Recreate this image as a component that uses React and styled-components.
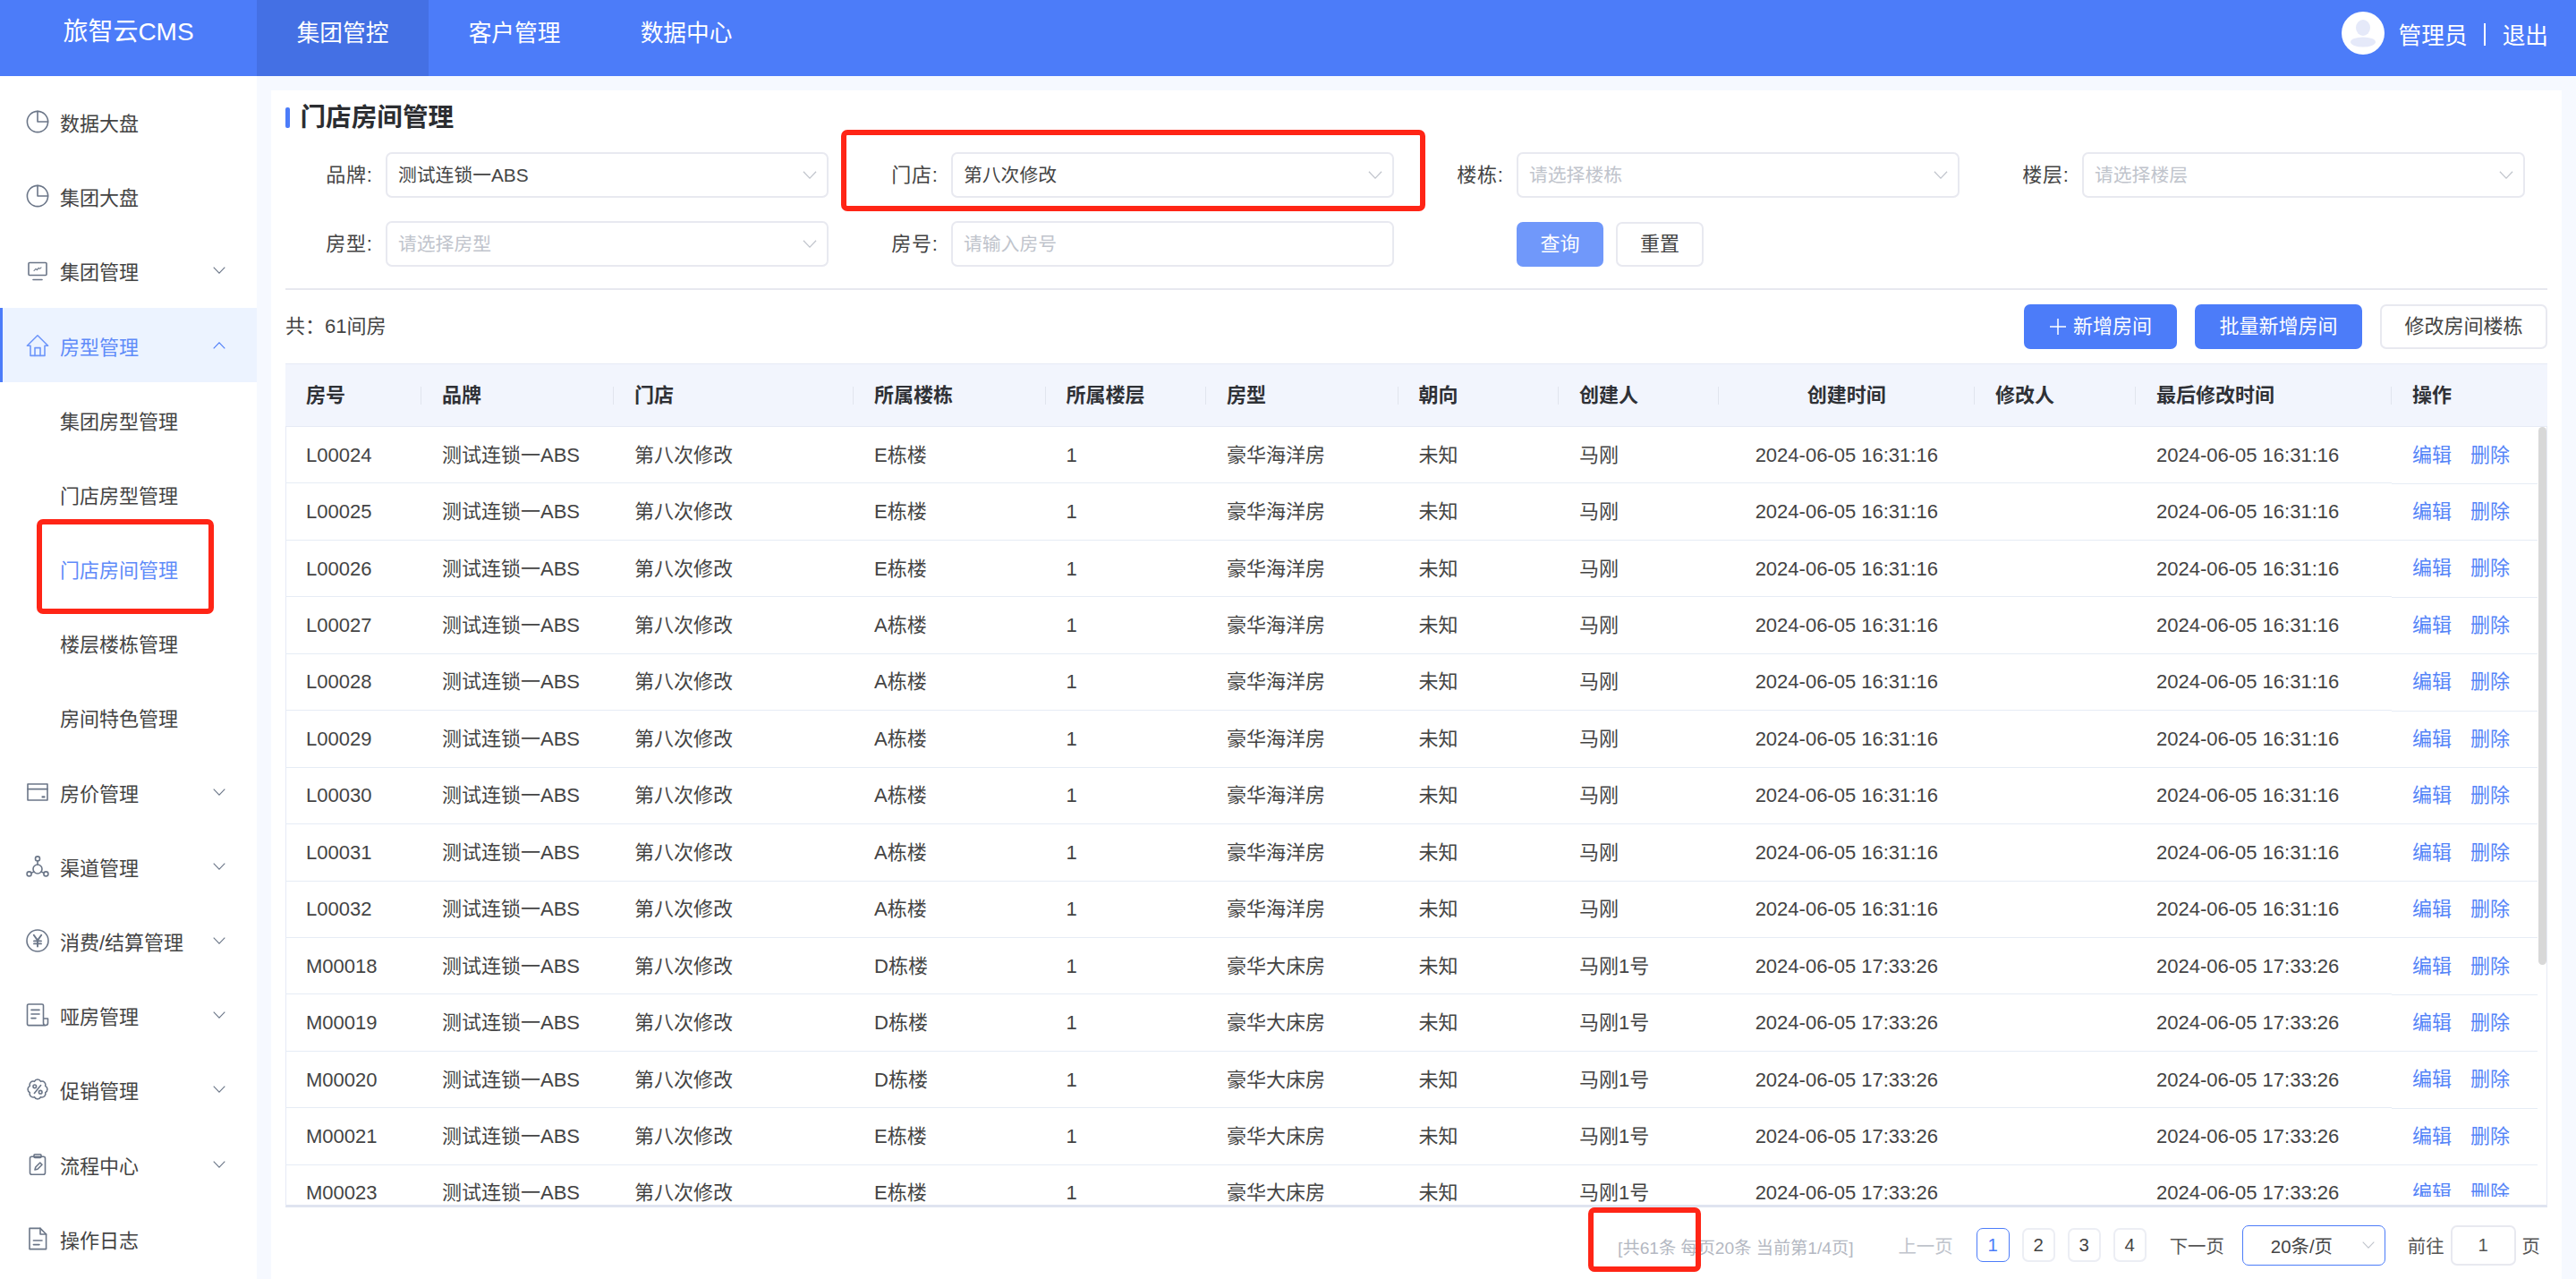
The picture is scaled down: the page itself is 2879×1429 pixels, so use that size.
import React from 'react';
import styled, { createGlobalStyle } from 'styled-components';

const GlobalStyle = createGlobalStyle`
	html, body {
		margin: 0;
		padding: 0;
		height: 100%;
		overflow: hidden;
		font-family: 'Liberation Sans', 'Noto Sans CJK SC', sans-serif;
		color: #444;
	}
	* {
		box-sizing: border-box;
	}
`;

const COLS = '152px 215px 268px 214.5px 179.5px 214.6px 179.4px 178.6px 286.4px 180px 286px';
const BLUE = '#4c7cf9';

// ---- icons ----
const Svg = ({ children, w = 26, h = 26 }) => (
	<svg width={w} height={h} viewBox='0 0 26 26' fill='none' stroke='currentColor' strokeWidth='1.6' strokeLinejoin='round' strokeLinecap='round'>
		{children}
	</svg>
);

const PieIcon = () => (
	<Svg>
		<circle cx='13' cy='13' r='11.6' />
		<path d='M13 1.4V13H24.6' />
	</Svg>
);
const MonitorIcon = () => (
	<Svg>
		<rect x='3' y='4.5' width='20' height='14' rx='1' />
		<path d='M8 23.5H18' />
		<path d='M9 13.5l2-2.2 1.4 1.4 1.8-2.4 1.2 1 1.6-1.4' strokeWidth='1.1' />
	</Svg>
);
const HouseIcon = () => (
	<Svg>
		<path d='M13 1.8L24.6 13.2H21V24.4H5V13.2H1.4Z' />
		<path d='M10 24.4V15.6H16V24.4' />
	</Svg>
);
const CardIcon = () => (
	<Svg>
		<rect x='2' y='4' width='22' height='18' />
		<path d='M2 9.6H24' />
		<path d='M17.6 18.4H21.4' strokeWidth='2.2' strokeLinecap='butt' />
	</Svg>
);
const NetworkIcon = () => (
	<Svg>
		<circle cx='13' cy='4.4' r='2.5' />
		<circle cx='3.6' cy='21.4' r='2.5' />
		<circle cx='22.4' cy='21.4' r='2.5' />
		<circle cx='13' cy='16' r='5' />
		<path d='M13 7V11M6 20.4L8.8 19M20 20.4L17.2 19' />
	</Svg>
);
const YenIcon = () => (
	<Svg>
		<circle cx='13' cy='13' r='12' />
		<path d='M8.8 6.8L13 12.6L17.2 6.8M13 12.6V19.6M9 13.4H17M9 16.4H17' strokeWidth='1.9' />
	</Svg>
);
const DocIcon = () => (
	<Svg>
		<path d='M22 24.6H3a1.5 1.5 0 0 1-1.5-1.5V2.5A1.5 1.5 0 0 1 3 1h15a1.5 1.5 0 0 1 1.5 1.5V22a2.5 2.5 0 0 0 5 0v-5h-5' />
		<path d='M6 7.4H15M6 12H15M6 16.6H11' />
	</Svg>
);
const ClipIcon = () => (
	<Svg>
		<rect x='4.5' y='4.2' width='17' height='20' rx='2' />
		<rect x='9' y='1.8' width='8' height='3.6' rx='1' />
		<path d='M10 19l.8-3 5-5 2.2 2.2-5 5Z' />
	</Svg>
);
const FileIcon = () => (
	<Svg>
		<path d='M4 1.4H16L22.6 8V24.6H4Z' />
		<path d='M16 1.4V8H22.6' />
		<path d='M8.4 15H18M8.4 19.6H15' />
	</Svg>
);

// scalloped badge: eight arcs around the centre
const lobes = Array.from({ length: 8 }, (_, i) => {
	const a = ((i + 0.5) * Math.PI) / 4;
	return [(13 + 9.4 * Math.cos(a)).toFixed(2), (13 + 9.4 * Math.sin(a)).toFixed(2)];
});
const badgePath = `M${lobes[7][0]} ${lobes[7][1]}` + lobes.map(([x, y]) => `A4 4 0 0 1 ${x} ${y}`).join('') + 'Z';

const PromoIcon = () => (
	<Svg>
		<path d={badgePath} />
		<circle cx='9.8' cy='9.8' r='1.8' />
		<circle cx='16.2' cy='16.2' r='1.8' />
		<path d='M16.6 8.6L9.4 17.4' />
	</Svg>
);

const ChevronSvg = styled.svg`
	display: block;
	flex: none;
	width: ${(p) => p.$w}px;
	height: ${(p) => Math.round(p.$w * 0.57)}px;
	color: ${(p) => p.$color};
	transform: ${(p) => (p.$up ? 'rotate(180deg)' : 'none')};
`;
const Chevron = ({ w = 16, color = '#c0c4cc', up }) => (
	<ChevronSvg $w={w} $color={color} $up={up} viewBox='0 0 14 8' fill='none' stroke='currentColor' strokeWidth='1.1'>
		<path d='M.7.7 7 7.2 13.3.7' />
	</ChevronSvg>
);

// ---- data ----
const menu = [
	{ label: '数据大盘', icon: <PieIcon /> },
	{ label: '集团大盘', icon: <PieIcon /> },
	{ label: '集团管理', icon: <MonitorIcon />, arrow: true },
	{ label: '房型管理', icon: <HouseIcon />, arrow: true, open: true },
	{ label: '集团房型管理', sub: true },
	{ label: '门店房型管理', sub: true },
	{ label: '门店房间管理', sub: true, current: true },
	{ label: '楼层楼栋管理', sub: true },
	{ label: '房间特色管理', sub: true },
	{ label: '房价管理', icon: <CardIcon />, arrow: true },
	{ label: '渠道管理', icon: <NetworkIcon />, arrow: true },
	{ label: '消费/结算管理', icon: <YenIcon />, arrow: true },
	{ label: '哑房管理', icon: <DocIcon />, arrow: true },
	{ label: '促销管理', icon: <PromoIcon />, arrow: true },
	{ label: '流程中心', icon: <ClipIcon />, arrow: true },
	{ label: '操作日志', icon: <FileIcon /> },
];

const heads = ['房号', '品牌', '门店', '所属楼栋', '所属楼层', '房型', '朝向', '创建人', '创建时间', '修改人', '最后修改时间'];

const makeRoom = (no, building) => {
	const early = no[0] === 'L';
	return {
		no,
		building,
		type: early ? '豪华海洋房' : '豪华大床房',
		creator: early ? '马刚' : '马刚1号',
		time: early ? '2024-06-05 16:31:16' : '2024-06-05 17:33:26',
	};
};

const rooms = [
	makeRoom('L00024', 'E栋楼'),
	makeRoom('L00025', 'E栋楼'),
	makeRoom('L00026', 'E栋楼'),
	makeRoom('L00027', 'A栋楼'),
	makeRoom('L00028', 'A栋楼'),
	makeRoom('L00029', 'A栋楼'),
	makeRoom('L00030', 'A栋楼'),
	makeRoom('L00031', 'A栋楼'),
	makeRoom('L00032', 'A栋楼'),
	makeRoom('M00018', 'D栋楼'),
	makeRoom('M00019', 'D栋楼'),
	makeRoom('M00020', 'D栋楼'),
	makeRoom('M00021', 'E栋楼'),
	makeRoom('M00023', 'E栋楼'),
];

function App() {
	return (
		<Page>
			<GlobalStyle />
			<TopBar>
				<Logo>旅智云CMS</Logo>
				<Tab $active>集团管控</Tab>
				<Tab>客户管理</Tab>
				<Tab>数据中心</Tab>
				<UserBox>
					<Avatar viewBox='0 0 48 48'>
						<circle cx='24' cy='24' r='24' fill='#fff' />
						<ellipse cx='24' cy='18' rx='8' ry='9' fill='#e5e9f9' />
						<ellipse cx='24' cy='34' rx='14' ry='5.5' fill='#e5e9f9' />
					</Avatar>
					<span>管理员</span>
					<UserSep />
					<span>退出</span>
				</UserBox>
			</TopBar>

			<Layout>
				<Sidebar>
					{menu.map((m) => (
						<MenuItem key={m.label} $open={m.open} $current={m.current} $sub={m.sub}>
							{m.icon && <MenuIcon $open={m.open}>{m.icon}</MenuIcon>}
							{m.label}
							{m.arrow && (
								<MenuArrow>
									<Chevron w={14} color={m.open ? BLUE : '#6b7688'} up={m.open} />
								</MenuArrow>
							)}
						</MenuItem>
					))}
				</Sidebar>

				<Main>
					<Card>
						<Title>门店房间管理</Title>
						<FilterGrid>
							<FormItem>
								<FormLabel>品牌:</FormLabel>
								<Field>
									<FieldText>测试连锁一ABS</FieldText>
									<Chevron />
								</Field>
							</FormItem>
							<FormItem>
								<FormLabel>门店:</FormLabel>
								<Field>
									<FieldText>第八次修改</FieldText>
									<Chevron />
								</Field>
							</FormItem>
							<FormItem>
								<FormLabel>楼栋:</FormLabel>
								<Field>
									<FieldText $empty>请选择楼栋</FieldText>
									<Chevron />
								</Field>
							</FormItem>
							<FormItem>
								<FormLabel>楼层:</FormLabel>
								<Field>
									<FieldText $empty>请选择楼层</FieldText>
									<Chevron />
								</Field>
							</FormItem>
							<FormItem>
								<FormLabel>房型:</FormLabel>
								<Field>
									<FieldText $empty>请选择房型</FieldText>
									<Chevron />
								</Field>
							</FormItem>
							<FormItem>
								<FormLabel>房号:</FormLabel>
								<TextInput placeholder='请输入房号' />
							</FormItem>
							<FormItem>
								<FormLabel />
								<SearchBtn>查询</SearchBtn>
								<PlainBtn $w={98}>重置</PlainBtn>
							</FormItem>
						</FilterGrid>

						<Toolbar>
							<Total>共：61间房</Total>
							<ToolBtns>
								<PrimaryBtn $w={171}>
									<PlusSvg viewBox='0 0 20 20'>
										<path d='M10 1V19M1 10H19' stroke='#fff' strokeWidth='1.5' />
									</PlusSvg>
									新增房间
								</PrimaryBtn>
								<PrimaryBtn $w={187}>批量新增房间</PrimaryBtn>
								<PlainBtn $w={187}>修改房间楼栋</PlainBtn>
							</ToolBtns>
						</Toolbar>

						<Table>
							<HeadRow>
								{heads.map((h) => (
									<HeadCell key={h} $center={h === '创建时间'}>
										{h}
									</HeadCell>
								))}
								<HeadCell $last>操作</HeadCell>
							</HeadRow>
							<TableBody>
								<MainRows>
									{rooms.map((r) => (
										<Row key={r.no}>
											<Cell>{r.no}</Cell>
											<Cell>测试连锁一ABS</Cell>
											<Cell>第八次修改</Cell>
											<Cell>{r.building}</Cell>
											<Cell>1</Cell>
											<Cell>{r.type}</Cell>
											<Cell>未知</Cell>
											<Cell>{r.creator}</Cell>
											<Cell $center>{r.time}</Cell>
											<Cell />
											<Cell>{r.time}</Cell>
										</Row>
									))}
								</MainRows>
								<FixedCol>
									{rooms.map((r) => (
										<OpRow key={r.no}>
											<OpLink>编辑</OpLink>
											<OpLink>删除</OpLink>
										</OpRow>
									))}
								</FixedCol>
								<ScrollThumb />
							</TableBody>
						</Table>

						<Pager>
							<PagerInfo>[共61条 每页20条 当前第1/4页]</PagerInfo>
							<PagerText $muted $ml={50}>上一页</PagerText>
							<PageList>
								<PageNum $active>1</PageNum>
								<PageNum>2</PageNum>
								<PageNum>3</PageNum>
								<PageNum>4</PageNum>
							</PageList>
							<PagerText>下一页</PagerText>
							<SizeSelect>
								20条/页
								<Chevron w={14} />
							</SizeSelect>
							<PagerText $ml={25}>前往</PagerText>
							<JumpInput defaultValue='1' />
							<PagerText>页</PagerText>
						</Pager>
					</Card>
				</Main>
			</Layout>

			{/* red marks drawn on the screenshot */}
			<RedMark $x={41} $y={580} $w={198} $h={106} />
			<RedMark $x={940} $y={145} $w={653} $h={91} />
			<RedMark $x={1775} $y={1349} $w={126} $h={72} />
		</Page>
	);
}

const Page = styled.div`
	position: relative;
	display: flex;
	flex-direction: column;
	width: 100vw;
	height: 100vh;
	overflow: hidden;
	background-color: #f6f9ff;
`;

const TopBar = styled.header`
	display: flex;
	flex: none;
	height: 85px;
	background-color: ${BLUE};
	color: #fff;
`;

const Logo = styled.div`
	width: 287px;
	font-size: 28px;
	line-height: 72px;
	text-align: center;
`;

const Tab = styled.div`
	width: 192px;
	font-size: 25.7px;
	line-height: 74px;
	text-align: center;
	background-color: ${(p) => (p.$active ? '#4470e4' : 'transparent')};
`;

const UserBox = styled.div`
	display: flex;
	align-items: center;
	height: 74px;
	margin-left: auto;
	padding-right: 31px;
	font-size: 25.7px;
`;

const Avatar = styled.svg`
	width: 48px;
	height: 48px;
	margin-right: 16px;
`;

const UserSep = styled.i`
	width: 2px;
	height: 25px;
	margin: 2px 18.5px 0;
	background-color: #fff;
`;

const Layout = styled.div`
	display: flex;
	flex: 1;
	min-height: 0;
`;

const Sidebar = styled.nav`
	flex: none;
	width: 287px;
	padding-top: 9.4px;
	background-color: #fff;
`;

const MenuItem = styled.div`
	display: flex;
	align-items: center;
	height: 83.2px;
	padding-left: ${(p) => (p.$sub ? '67px' : '28.5px')};
	font-size: 22px;
	color: ${(p) => (p.$open || p.$current ? '#5f8bf9' : '#444')};
	background-color: ${(p) => (p.$open ? '#ecf3ff' : 'transparent')};
	box-shadow: ${(p) => (p.$open ? `inset 3px 0 0 ${BLUE}` : 'none')};
`;

const MenuIcon = styled.span`
	display: flex;
	align-items: center;
	justify-content: center;
	flex: none;
	width: 26px;
	height: 27px;
	margin-right: 12.5px;
	color: ${(p) => (p.$open ? '#6f97fa' : '#6b7688')};
`;

const MenuArrow = styled.span`
	margin-left: auto;
	padding-right: 35px;
`;

const Main = styled.main`
	flex: 1;
	min-width: 0;
	padding: 16px 16px 0;
`;

const Card = styled.section`
	display: flex;
	flex-direction: column;
	height: 100%;
	padding: 16px 16px 0;
	background-color: #fff;
`;

const Title = styled.h1`
	display: flex;
	align-items: center;
	height: 28px;
	margin: 0;
	font-size: 28.6px;
	font-weight: 700;
	line-height: 28px;
	color: #2b2d31;

	&::before {
		content: '';
		width: 5px;
		height: 23px;
		margin-right: 11.5px;
		border-radius: 2px;
		background-color: ${BLUE};
	}
`;

const FilterGrid = styled.div`
	display: grid;
	grid-template-columns: repeat(4, 632px);
	row-gap: 26px;
	margin-top: 25px;
	padding-bottom: 24px;
	border-bottom: 2px solid #e7e8ef;
`;

const FormItem = styled.div`
	display: flex;
	align-items: center;
	height: 51px;
`;

const FormLabel = styled.label`
	flex: none;
	width: 112px;
	padding: 1px 14.5px 0 0;
	font-size: 22px;
	line-height: 30px;
	letter-spacing: 0.7px;
	text-align: right;
`;

const Field = styled.div`
	display: flex;
	align-items: center;
	justify-content: space-between;
	width: 495px;
	height: 51px;
	padding: 0 11px 0 12px;
	border: 2px solid #e8e9f0;
	border-radius: 7px;
	background-color: #fff;
`;

const FieldText = styled.span`
	padding-top: 1px;
	font-size: 20.8px;
	line-height: 30px;
	color: ${(p) => (p.$empty ? '#c0c4cc' : '#444')};
`;

const TextInput = styled.input`
	width: 495px;
	height: 51px;
	padding: 1px 12px 0;
	border: 2px solid #e8e9f0;
	border-radius: 7px;
	outline: none;
	font: inherit;
	font-size: 20.8px;

	&::placeholder {
		color: #c0c4cc;
	}
`;

const BaseBtn = styled.button`
	display: flex;
	align-items: center;
	justify-content: center;
	flex: none;
	width: ${(p) => p.$w}px;
	height: 50px;
	padding: 0;
	border-radius: 7px;
	font: inherit;
	font-size: 22px;
	line-height: 30px;
`;

const SearchBtn = styled(BaseBtn)`
	width: 97px;
	margin-right: 14px;
	border: none;
	color: #fff;
	background-color: #7098fa;
`;

const PrimaryBtn = styled(BaseBtn)`
	border: none;
	color: #fff;
	background-color: ${BLUE};
`;

const PlainBtn = styled(BaseBtn)`
	border: 2px solid #e8e9f0;
	color: #444;
	background-color: #fff;
`;

const PlusSvg = styled.svg`
	width: 20px;
	height: 20px;
	margin-right: 7px;
`;

const Toolbar = styled.div`
	display: flex;
	align-items: center;
	justify-content: space-between;
	margin-top: 16px;
`;

const Total = styled.div`
	font-size: 22px;
	line-height: 30px;
`;

const ToolBtns = styled.div`
	display: flex;
	gap: 20px;
`;

const Table = styled.div`
	display: flex;
	flex-direction: column;
	flex: none;
	height: 943px;
	margin-top: 16px;
	border: 1px solid #e6eaf5;
	border-bottom: 3px solid #dfe4f0;
`;

const HeadRow = styled.div`
	display: grid;
	grid-template-columns: ${COLS} 1fr;
	align-items: center;
	flex: none;
	height: 70px;
	margin-left: -1px;
	margin-right: -1px;
	border-bottom: 1px solid #e6eaf5;
	background-color: #f2f5fd;
`;

const HeadCell = styled.div`
	position: relative;
	padding: 1px 23px 0;
	font-size: 22px;
	font-weight: 700;
	line-height: 30px;
	color: #2f3136;
	text-align: ${(p) => (p.$center ? 'center' : 'left')};

	&::after {
		content: '';
		display: ${(p) => (p.$last ? 'none' : 'block')};
		position: absolute;
		top: 50%;
		right: 0;
		width: 1px;
		height: 20px;
		margin-top: -10px;
		background-color: #e1e5ee;
	}
`;

const TableBody = styled.div`
	position: relative;
	display: flex;
	flex: 1;
	min-height: 0;
	overflow: hidden;
	margin-left: -1px;
	padding-left: 1px;
`;

const MainRows = styled.div`
	flex: none;
	width: 2353px;
`;

const Row = styled.div`
	display: grid;
	grid-template-columns: ${COLS};
	align-items: center;
	height: 63.44px;
	margin-left: -1px;
	border-bottom: 1px solid #e6ecf5;
`;

const Cell = styled.div`
	padding: 1px 23px 0;
	font-size: 22px;
	line-height: 30px;
	color: #444;
	white-space: nowrap;
	text-align: ${(p) => (p.$center ? 'center' : 'left')};
`;

const FixedCol = styled.div`
	flex: none;
	width: 163px;
	height: 860px;
	margin-top: 0.4px;
	overflow: hidden;
`;

const OpRow = styled.div`
	display: flex;
	align-items: center;
	gap: 21px;
	height: 63.44px;
	padding-left: 23px;
	border-bottom: 1px solid #e6ecf5;
`;

const OpLink = styled.a`
	font-size: 22px;
	line-height: 30px;
	color: #5584f8;
`;

const ScrollThumb = styled.div`
	position: absolute;
	top: 0;
	right: 0;
	width: 9px;
	height: 601px;
	border-radius: 5px;
	background-color: #d8d8d8;
`;

const Pager = styled.div`
	display: flex;
	align-items: center;
	justify-content: flex-end;
	flex: none;
	height: 84px;
	padding-right: 8px;
	font-size: 20.4px;
`;

const PagerInfo = styled.span`
	margin-top: 4px;
	font-size: 19.2px;
	color: #b4b8c2;
`;

const PagerText = styled.span`
	margin-left: ${(p) => p.$ml || 0}px;
	color: ${(p) => (p.$muted ? '#c0c4cc' : '#555')};
`;

const PageList = styled.div`
	display: flex;
	gap: 14px;
	margin: 0 26px;
`;

const PageNum = styled.span`
	display: flex;
	align-items: center;
	justify-content: center;
	width: 37px;
	height: 38px;
	border: ${(p) => (p.$active ? `1px solid ${BLUE}` : '2px solid #eceef4')};
	border-radius: 7px;
	color: ${(p) => (p.$active ? BLUE : '#444')};
`;

const SizeSelect = styled.div`
	display: flex;
	align-items: center;
	justify-content: space-between;
	width: 160px;
	height: 45px;
	margin-left: 20px;
	padding: 0 11px 0 31px;
	border: 1px solid ${BLUE};
	border-radius: 7px;
	color: #444;
`;

const JumpInput = styled.input`
	width: 73px;
	height: 45px;
	margin: 0 7px;
	border: 2px solid #e8e9f0;
	border-radius: 7px;
	outline: none;
	font: inherit;
	color: #555;
	text-align: center;
`;

const RedMark = styled.div`
	position: absolute;
	left: ${(p) => p.$x}px;
	top: ${(p) => p.$y}px;
	width: ${(p) => p.$w}px;
	height: ${(p) => p.$h}px;
	border: 6px solid #ff2516;
	border-radius: 7px;
	pointer-events: none;
`;

export default App;
